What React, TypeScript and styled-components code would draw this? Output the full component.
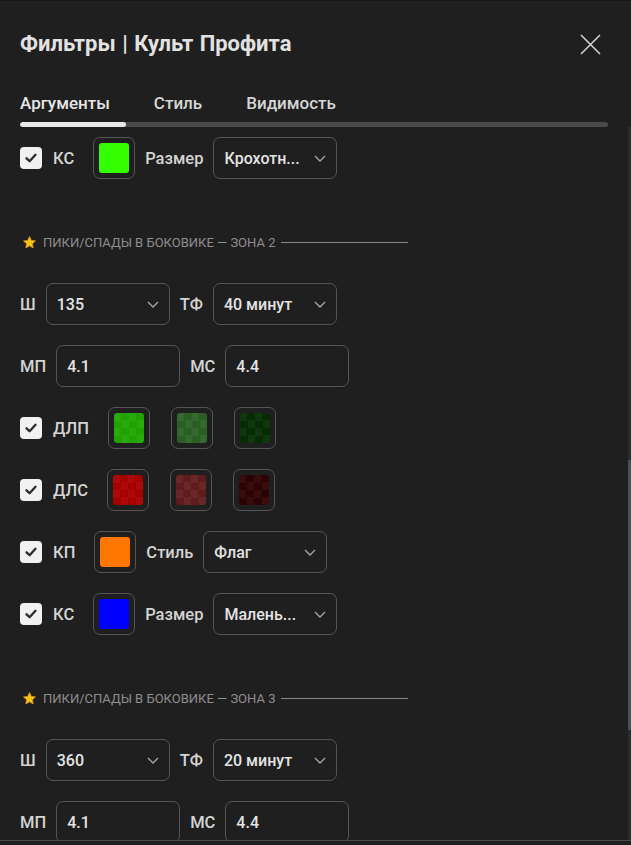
import React from "react";
import styled, { createGlobalStyle } from "styled-components";

const GlobalStyle = createGlobalStyle`
  html, body {
    margin: 0;
    padding: 0;
    background: #1f1f1f;
  }
  * {
    box-sizing: border-box;
  }
`;

const Dialog = styled.div`
  width: 631px;
  height: 845px;
  background: #1f1f1f;
  border-top: 1px solid #151515;
  display: flex;
  flex-direction: column;
  font-family: Roboto, "Open Sans", "Liberation Sans", sans-serif;
  color: #e0e0e0;
  overflow: hidden;
`;

const Header = styled.div`
  padding: 29px 23px 0 20px;
`;

const TitleRow = styled.div`
  display: flex;
  align-items: center;
  justify-content: space-between;
  height: 28px;
`;

const Title = styled.h1`
  margin: 0;
  font-size: 22px;
  font-weight: 700;
  line-height: 28px;
  color: #e2e2e2;
  word-spacing: 1px;
`;

const CloseButton = styled.button`
  width: 22px;
  height: 22px;
  padding: 0;
  margin-right: 7px;
  border: 0;
  background: none;
  display: flex;
  align-items: center;
  justify-content: center;
  cursor: pointer;
`;

const Tabs = styled.div`
  display: flex;
  gap: 44px;
  margin-top: 33px;
`;

const Tab = styled.div<{ $active?: boolean }>`
  font-size: 17px;
  font-weight: 500;
  line-height: 24px;
  color: ${(p) => (p.$active ? "#e6e6e6" : "#d6d6d6")};
`;

const Track = styled.div`
  margin-top: 7px;
  height: 5px;
  border-radius: 3px;
  background: #4a4a4a;
  overflow: hidden;
`;

const TrackFill = styled.div`
  height: 100%;
  width: 106px;
  border-radius: 3px;
  background: #e8e8e8;
`;

const Scroll = styled.div`
  position: relative;
  flex: 1;
  overflow: hidden;
  border-bottom: 1px solid #4c4c4c;
`;

const ScrollTrack = styled.div`
  position: absolute;
  top: 0;
  right: 0;
  bottom: 0;
  width: 3px;
  background: #2a2b31;
`;

const ScrollThumb = styled.div`
  position: absolute;
  top: 333px;
  left: 0;
  width: 3px;
  height: 270px;
  background: #4b4e57;
`;

const Footer = styled.div`
  height: 4px;
  background: #1f1f1f;
`;

const List = styled.div`
  display: flex;
  flex-direction: column;
  gap: 20px;
  padding: 10px 20px 0 20px;
`;

const Row = styled.div`
  display: flex;
  align-items: center;
  gap: 10px;
  height: 42px;
`;

const CheckGroup = styled.div`
  display: flex;
  align-items: center;
  gap: 11px;
  margin-right: 9px;
`;

const Checkbox = styled.div`
  width: 22px;
  height: 22px;
  border-radius: 4px;
  background: #f1f1f1;
  display: flex;
  align-items: center;
  justify-content: center;
`;

const Label = styled.span`
  font-size: 16.5px;
  font-weight: 500;
  color: #d4d4d4;
  white-space: nowrap;
`;

const SwatchGroup = styled.div`
  display: flex;
  gap: 21px;
`;

const Swatch = styled.div`
  width: 42px;
  height: 42px;
  border: 1px solid #555;
  border-radius: 7px;
  display: flex;
  align-items: center;
  justify-content: center;
`;

const SwatchFill = styled.div<{ $a: string; $b: string }>`
  width: 30px;
  height: 30px;
  border-radius: 3px;
  background: repeating-conic-gradient(${(p) => p.$a} 0 25%, ${(p) => p.$b} 0 50%) 0 0 / 15px 15px;
`;

const Field = styled.div`
  width: 124px;
  height: 42px;
  border: 1px solid #555;
  border-radius: 7px;
  padding: 0 10px 0 10px;
  display: flex;
  align-items: center;
  justify-content: space-between;
  font-size: 16px;
  font-weight: 500;
  color: #e4e4e4;
  white-space: nowrap;
`;

const SectionTitle = styled.div`
  display: flex;
  align-items: center;
  height: 16px;
  margin: 35px 0 13px 2px;
  font-size: 13px;
  color: #8e8e8e;
  text-transform: uppercase;
  white-space: nowrap;
`;

const Star = styled.svg`
  width: 15px;
  height: 15px;
  margin-right: 6px;
`;

const SectionLine = styled.span`
  width: 127px;
  height: 1px;
  background: #8a8a8a;
  margin-left: 6px;
`;

const Check = () => (
  <Checkbox>
    <svg width="14" height="14" viewBox="0 0 14 14">
      <polyline
        points="2.5,7.3 5.6,10.2 11.5,3.8"
        fill="none"
        stroke="#2b2b2b"
        strokeWidth="2.3"
        strokeLinecap="round"
        strokeLinejoin="round"
      />
    </svg>
  </Checkbox>
);

const Chevron = () => (
  <svg width="12" height="7" viewBox="0 0 12 7">
    <polyline points="1,1 6,6 11,1" fill="none" stroke="#a8a8a8" strokeWidth="1.3" />
  </svg>
);

const Select: React.FC<{ value: string }> = ({ value }) => (
  <Field>
    <span>{value}</span>
    <Chevron />
  </Field>
);

const Color: React.FC<{ a: string; b?: string }> = ({ a, b }) => (
  <Swatch>
    <SwatchFill $a={a} $b={b ?? a} />
  </Swatch>
);

const Section: React.FC<{ zone: number }> = ({ zone }) => (
  <SectionTitle>
    <Star viewBox="0 0 24 24">
      <path
        d="M12 2.5l2.9 6.1 6.6.8-4.9 4.6 1.3 6.6L12 17.3l-5.9 3.3 1.3-6.6-4.9-4.6 6.6-.8z"
        fill="#f6c21c"
        stroke="#e0a21a"
        strokeWidth="1.2"
        strokeLinejoin="round"
      />
    </Star>
    Пики/спады в боковике — зона {zone}
    <SectionLine />
  </SectionTitle>
);

const App: React.FC = () => {
  return (
    <>
      <GlobalStyle />
      <Dialog>
        <Header>
          <TitleRow>
            <Title>Фильтры | Культ Профита</Title>
            <CloseButton aria-label="Закрыть">
              <svg width="21" height="21" viewBox="0 0 21 21">
                <path d="M1 1L20 20M20 1L1 20" stroke="#d2d2d2" strokeWidth="1.6" />
              </svg>
            </CloseButton>
          </TitleRow>
          <Tabs>
            <Tab $active>Аргументы</Tab>
            <Tab>Стиль</Tab>
            <Tab>Видимость</Tab>
          </Tabs>
          <Track>
            <TrackFill />
          </Track>
        </Header>

        <Scroll>
          <List>
            <Row>
              <CheckGroup>
                <Check />
                <Label>КС</Label>
              </CheckGroup>
              <Color a="#33ff00" />
              <Label>Размер</Label>
              <Select value="Крохотн..." />
            </Row>

            <Section zone={2} />

            <Row>
              <Label>Ш</Label>
              <Select value="135" />
              <Label>ТФ</Label>
              <Select value="40 минут" />
            </Row>
            <Row>
              <Label>МП</Label>
              <Field>4.1</Field>
              <Label>МС</Label>
              <Field>4.4</Field>
            </Row>
            <Row>
              <CheckGroup>
                <Check />
                <Label>ДЛП</Label>
              </CheckGroup>
              <SwatchGroup>
                <Color a="#20a201" b="#27aa0b" />
                <Color a="#2b5e23" b="#346a2d" />
                <Color a="#072b05" b="#10380e" />
              </SwatchGroup>
            </Row>
            <Row>
              <CheckGroup>
                <Check />
                <Label>ДЛС</Label>
              </CheckGroup>
              <SwatchGroup>
                <Color a="#a40000" b="#ac0a0a" />
                <Color a="#5e1c1c" b="#6a2727" />
                <Color a="#2a0404" b="#380c0c" />
              </SwatchGroup>
            </Row>
            <Row>
              <CheckGroup>
                <Check />
                <Label>КП</Label>
              </CheckGroup>
              <Color a="#ff7700" />
              <Label>Стиль</Label>
              <Select value="Флаг" />
            </Row>
            <Row>
              <CheckGroup>
                <Check />
                <Label>КС</Label>
              </CheckGroup>
              <Color a="#0000ff" />
              <Label>Размер</Label>
              <Select value="Малень..." />
            </Row>

            <Section zone={3} />

            <Row>
              <Label>Ш</Label>
              <Select value="360" />
              <Label>ТФ</Label>
              <Select value="20 минут" />
            </Row>
            <Row>
              <Label>МП</Label>
              <Field>4.1</Field>
              <Label>МС</Label>
              <Field>4.4</Field>
            </Row>
          </List>
          <ScrollTrack>
            <ScrollThumb />
          </ScrollTrack>
        </Scroll>
        <Footer />
      </Dialog>
    </>
  );
};

export default App;
